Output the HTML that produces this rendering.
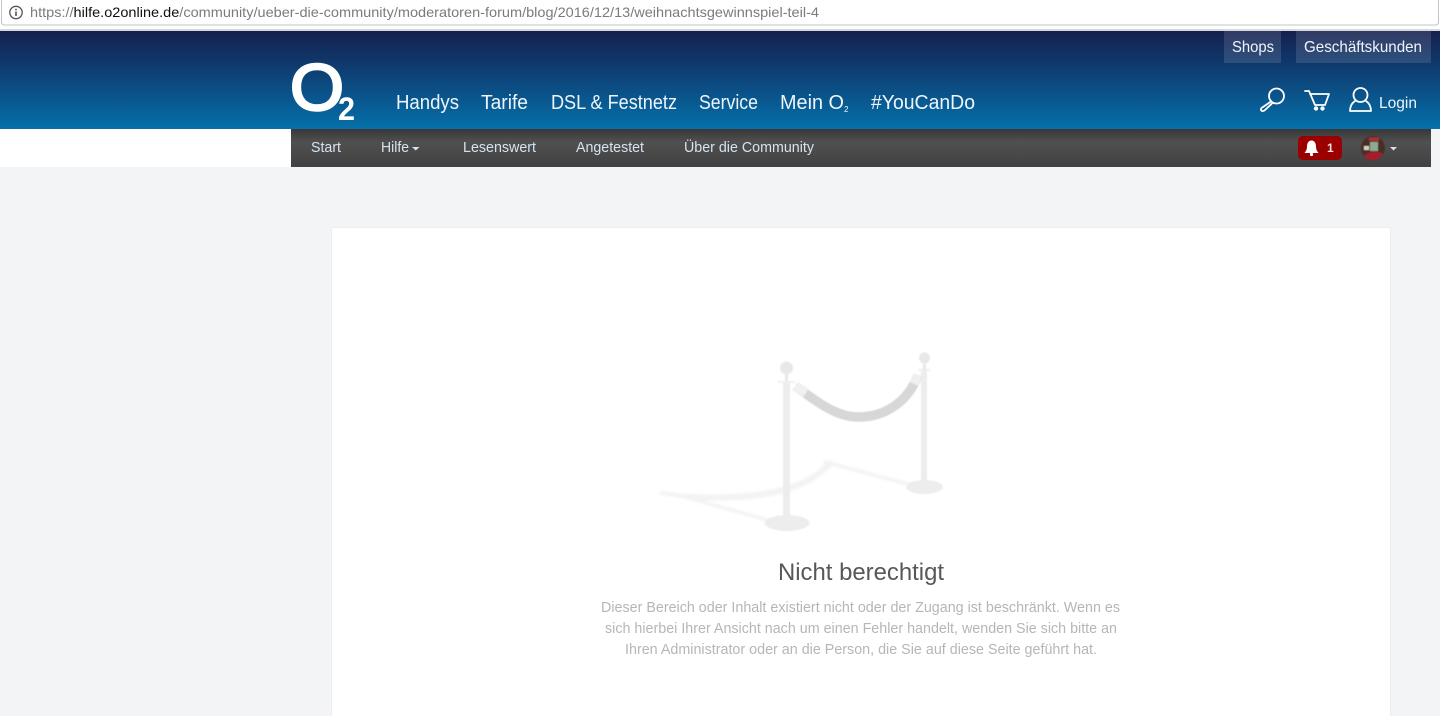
<!DOCTYPE html>
<html lang="de">
<head>
<meta charset="utf-8">
<title>Nicht berechtigt</title>
<style>
html,body{margin:0;padding:0;width:1440px;height:716px;overflow:hidden;background:#f3f4f6}
svg{display:block;position:absolute;left:0;top:0}
text{font-family:"Liberation Sans",sans-serif;white-space:pre}
</style>
</head>
<body>
<svg width="1440" height="716" viewBox="0 0 1440 716" xmlns="http://www.w3.org/2000/svg">
<defs>
<linearGradient id="hd" x1="0" y1="0" x2="0" y2="1">
<stop offset="0" stop-color="#15204f"/>
<stop offset=".35" stop-color="#0f3a6e"/>
<stop offset="1" stop-color="#0570aa"/>
</linearGradient>
<linearGradient id="sub" x1="0" y1="0" x2="0" y2="1">
<stop offset="0" stop-color="#383838"/>
<stop offset=".35" stop-color="#505050"/>
<stop offset="1" stop-color="#414141"/>
</linearGradient>
<filter id="b1"><feGaussianBlur stdDeviation=".5"/></filter>
<filter id="b2"><feGaussianBlur stdDeviation="1.2"/></filter>
</defs>

<!-- Page -->
<rect width="1440" height="716" fill="#f3f4f6"/>

<!-- Browser bar -->
<rect width="1440" height="31" fill="#fff"/>
<rect x="1.5" y="-3" width="1437" height="28" rx="3" fill="#fff" stroke="#c4c4c4"/>
<rect y="29" width="1440" height="2" fill="#d8d8dc"/>
<circle cx="16" cy="12.500" r="6.200" fill="none" stroke="#555" stroke-width="1.300"/>
<rect x="15.200" y="11.500" width="1.600" height="4.500" fill="#555"/>
<rect x="15.200" y="8.700" width="1.600" height="1.600" fill="#555"/>
<text x="30" y="17" font-size="14" fill="#7b7b7b" textLength="789" lengthAdjust="spacingAndGlyphs">https://<tspan fill="#111">hilfe.o2online.de</tspan>/community/ueber-die-community/moderatoren-forum/blog/2016/12/13/weihnachtsgewinnspiel-teil-4</text>

<!-- Header -->
<rect y="31" width="1440" height="98" fill="url(#hd)"/>
<rect x="1224" y="31" width="57" height="32" fill="#fff" fill-opacity=".12"/>
<rect x="1296" y="31" width="135" height="32" fill="#fff" fill-opacity=".12"/>
<text x="1232" y="52" font-size="16" fill="#f2f5f8" textLength="42" lengthAdjust="spacingAndGlyphs">Shops</text>
<text x="1304" y="52" font-size="16" fill="#f2f5f8" textLength="118" lengthAdjust="spacingAndGlyphs">Geschäftskunden</text>

<!-- Logo -->
<text x="290" y="110" font-size="66" fill="#fff" stroke="#fff" stroke-width="2.400" textLength="54" lengthAdjust="spacingAndGlyphs">O</text>
<text x="338" y="120" font-size="32" font-weight="700" fill="#fff" textLength="17" lengthAdjust="spacingAndGlyphs">2</text>

<!-- Main nav -->
<g font-size="20.500" fill="#eef6fb">
<text x="396" y="109" textLength="63" lengthAdjust="spacingAndGlyphs">Handys</text>
<text x="481" y="109" textLength="47" lengthAdjust="spacingAndGlyphs">Tarife</text>
<text x="551" y="109" textLength="126" lengthAdjust="spacingAndGlyphs">DSL &amp; Festnetz</text>
<text x="699" y="109" textLength="59" lengthAdjust="spacingAndGlyphs">Service</text>
<text x="780" y="109" textLength="64" lengthAdjust="spacingAndGlyphs">Mein O</text>
<text x="844" y="112" font-size="8">2</text>
<text x="871" y="109" textLength="104" lengthAdjust="spacingAndGlyphs">#YouCanDo</text>
</g>

<!-- Header icons -->
<g fill="none" stroke="#fff" stroke-width="1.800" stroke-linecap="round" stroke-linejoin="round">
<circle cx="1276.500" cy="96" r="7.500"/>
<path d="M1271 101.500 L1261.500 108 Q1260 110 1262 111 Q1263.500 111.500 1265 110 L1272.500 103"/>
<path d="M1305 91 H1309 L1315 105 H1325 L1329 94 H1310"/>
<circle cx="1316" cy="108.500" r="1.300" fill="#fff"/>
<circle cx="1322.500" cy="108.500" r="1.300" fill="#fff"/>
<circle cx="1360.500" cy="95" r="7"/>
<path d="M1355 101 C1352 103 1350 106 1350 111 H1371 C1371 106 1369 103 1366 101"/>
</g>
<text x="1379" y="108" font-size="15.500" fill="#eaf6fc" textLength="38" lengthAdjust="spacingAndGlyphs">Login</text>

<!-- Sub nav -->
<rect x="0" y="129" width="291" height="38" fill="#fff"/>
<rect x="291" y="129" width="1140" height="38" fill="url(#sub)"/>
<g font-size="14.500" fill="#d5e3ef">
<text x="311" y="152" textLength="30" lengthAdjust="spacingAndGlyphs">Start</text>
<text x="381" y="152" textLength="28" lengthAdjust="spacingAndGlyphs">Hilfe</text>
<text x="463" y="152" textLength="73" lengthAdjust="spacingAndGlyphs">Lesenswert</text>
<text x="576" y="152" textLength="68" lengthAdjust="spacingAndGlyphs">Angetestet</text>
<text x="684" y="152" textLength="130" lengthAdjust="spacingAndGlyphs">Über die Community</text>
</g>
<path d="M412 147 H419.500 L415.750 150.500 Z" fill="#d5e3ef"/>

<!-- Badge -->
<rect x="1298" y="136" width="44" height="24" rx="5" fill="#9a0000"/>
<path d="M1311.500 140.500 C1308 140.500 1307 144 1307 146.500 C1307 149.500 1306 151 1304.500 153 H1318.500 C1317 151 1316 149.500 1316 146.500 C1316 144 1315 140.500 1311.500 140.500 Z" fill="#fff"/>
<circle cx="1311.500" cy="154.500" r="1.600" fill="#fff"/>
<text x="1327" y="152" font-size="12" font-weight="700" fill="#f4dede">1</text>

<!-- Avatar -->
<g filter="url(#b1)">
<circle cx="1373" cy="148" r="12" fill="#4a2f28"/>
<path d="M1364 156 Q1373 149 1383 154 Q1379 160 1373 160 Q1367 160 1364 156Z" fill="#a81c2c"/>
<rect x="1370" y="142" width="8" height="9" fill="#8fa890"/>
<rect x="1369" y="137.500" width="10" height="3.500" fill="#a83030"/>
<rect x="1364" y="146" width="5" height="4" fill="#d8d0c0"/>
</g>
<path d="M1390 147 H1397 L1393.500 150.500 Z" fill="#d5e3ef"/>

<!-- Card -->
<rect x="331.500" y="227.500" width="1059" height="500" rx="2" fill="#fff" stroke="#ededee"/>

<!-- Stanchions -->
<g filter="url(#b2)" fill="none" stroke="#f3f3f3" stroke-linecap="round">
<path d="M662 493 L690 497" stroke-width="4"/>
<path d="M688 497 C735 499 800 498 830 463" stroke-width="6"/>
<path d="M825 462 L908 484" stroke-width="3.500"/>
<path d="M688 498 L768 520" stroke-width="3.500"/>
</g>
<g filter="url(#b1)">
<ellipse cx="787" cy="523" rx="22.500" ry="8" fill="#ededed"/>
<ellipse cx="924.500" cy="487" rx="18.500" ry="7" fill="#ededed"/>
<rect x="783" y="382" width="7" height="139" fill="#ededed"/>
<rect x="921" y="370" width="6" height="115" fill="#ededed"/>
<rect x="778" y="381" width="17" height="2" fill="#f0f0f0"/>
<rect x="918" y="369" width="12" height="2" fill="#f0f0f0"/>
<circle cx="786.500" cy="368" r="6.500" fill="#e8e8e8"/>
<circle cx="924.500" cy="358" r="5.500" fill="#e8e8e8"/>
<path d="M786.500 374 V382 M924.500 363 V370" stroke="#e8e8e8" stroke-width="3"/>
<path d="M795 386 C815 400 835 417 858 417 C885 417 908 402 918 375" fill="none" stroke="#d7d7d7" stroke-width="9.500"/>
<path d="M795 386 L806 393" fill="none" stroke="#f0f0f0" stroke-width="10"/>
<path d="M918 375 L914 384" fill="none" stroke="#f0f0f0" stroke-width="9"/>
</g>

<!-- Message -->
<text x="778" y="580" font-size="24" fill="#58585a" textLength="166" lengthAdjust="spacingAndGlyphs">Nicht berechtigt</text>
<g font-size="14.500" fill="#b6b6ba">
<text x="601" y="612" textLength="519" lengthAdjust="spacingAndGlyphs">Dieser Bereich oder Inhalt existiert nicht oder der Zugang ist beschränkt. Wenn es</text>
<text x="605" y="633" textLength="512" lengthAdjust="spacingAndGlyphs">sich hierbei Ihrer Ansicht nach um einen Fehler handelt, wenden Sie sich bitte an</text>
<text x="625" y="654" textLength="472" lengthAdjust="spacingAndGlyphs">Ihren Administrator oder an die Person, die Sie auf diese Seite geführt hat.</text>
</g>
</svg>
</body>
</html>
